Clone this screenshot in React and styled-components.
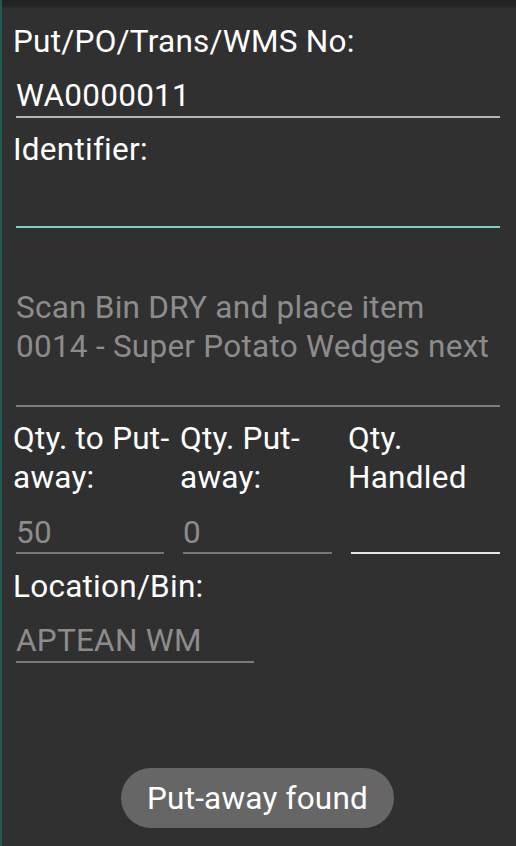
import React from "react";
import styled, { createGlobalStyle } from "styled-components";

const GlobalStyle = createGlobalStyle`
  html, body {
    margin: 0;
    padding: 0;
    background: #303030;
  }
  body {
    font-family: Roboto, "Noto Sans", sans-serif;
  }
`;

const Screen = styled.div`
  position: relative;
  width: 516px;
  height: 846px;
  box-sizing: border-box;
  background: #303030;
  border-left: 2px solid #1f5b52;
  overflow: hidden;
`;

const StatusShade = styled.div`
  height: 8px;
  background: linear-gradient(#222222 0, #252525 6px, #2d2d2d 8px);
`;

const Form = styled.div`
  padding: 14px 16px 0 11px;
  display: flex;
  flex-direction: column;
`;

const Label = styled.div`
  color: #ffffff;
  font-size: 31.5px;
  line-height: 39px;
  letter-spacing: 0.25px;
  white-space: nowrap;
  margin-top: ${(p) => p.gap || 0}px;
`;

const Field = styled.div`
  margin: ${(p) => p.gap || 0}px 0 0 3px;
  min-height: ${(p) => (p.lines || 1) * 39}px;
  padding-bottom: ${(p) => (p.pb === undefined ? 1 : p.pb)}px;
  border-bottom: 2px solid ${(p) => p.line || "#8a8a8a"};
  color: ${(p) => (p.muted ? "#8c8c8c" : "#ffffff")};
  font-size: 31.5px;
  line-height: 39px;
  letter-spacing: 0.25px;
  white-space: nowrap;
  width: ${(p) => p.width || "auto"};
  box-sizing: content-box;
`;

const QtyRow = styled.div`
  display: grid;
  grid-template-columns: 167px 168px 1fr;
  margin-top: 12px;
`;

const QtyCol = styled.div`
  display: flex;
  flex-direction: column;
  padding-right: ${(p) => p.pad}px;
`;

const Toast = styled.div`
  position: absolute;
  left: 119px;
  bottom: 18px;
  width: 273px;
  height: 60px;
  border-radius: 30px;
  background: #666666;
  color: #ffffff;
  font-size: 31.5px;
  letter-spacing: 0.2px;
  display: flex;
  align-items: center;
  justify-content: center;
`;

export default function App() {
  return (
    <>
      <GlobalStyle />
      <Screen>
        <StatusShade />
        <Form>
          <Label>Put/PO/Trans/WMS No:</Label>
          <Field gap={15} line="#b4b4b4">WA0000011</Field>
          <Label gap={12}>Identifier:</Label>
          <Field gap={15} line="#7fcfc2" pb={3} />
          <Field gap={60} lines={3} muted line="#7c7c7c" pb={0}>
            Scan Bin DRY and place item
            <br />
            0014 - Super Potato Wedges next
          </Field>
          <QtyRow>
            <QtyCol pad={16}>
              <Label>
                Qty. to Put-
                <br />
                away:
              </Label>
              <Field gap={16} muted line="#777777" pb={0}>50</Field>
            </QtyCol>
            <QtyCol pad={16}>
              <Label>
                Qty. Put-
                <br />
                away:
              </Label>
              <Field gap={16} muted line="#777777" pb={0}>0</Field>
            </QtyCol>
            <QtyCol pad={0}>
              <Label>
                Qty.
                <br />
                Handled
              </Label>
              <Field gap={16} line="#e6e6e6" pb={0} />
            </QtyCol>
          </QtyRow>
          <Label gap={13}>Location/Bin:</Label>
          <Field gap={15} muted line="#7a7a7a" width="238px">APTEAN WM</Field>
        </Form>
        <Toast>Put-away found</Toast>
      </Screen>
    </>
  );
}
